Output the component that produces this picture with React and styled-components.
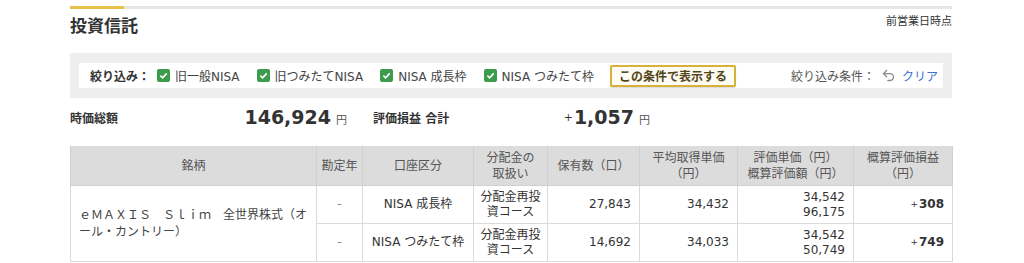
import React from "react";
import styled, { createGlobalStyle } from "styled-components";
import { Undo2 } from "lucide-react";

const GlobalStyle = createGlobalStyle`
  body {
    margin: 0;
    background: #fff;
    color: #333;
    font-family: "DejaVu Sans", "Noto Sans CJK JP", sans-serif;
  }
`;

const columns = [246, 46, 111, 74, 92, 98, 116, 99];

const rows = [
  { year: "-", account: "NISA 成長枠", payout: ["分配金再投", "資コース"], qty: "27,843", avg: "34,432", unit: "34,542", value: "96,175", gain: "308" },
  { year: "-", account: "NISA つみたて枠", payout: ["分配金再投", "資コース"], qty: "14,692", avg: "34,033", unit: "34,542", value: "50,749", gain: "749" },
];

const filters = ["旧一般NISA", "旧つみたてNISA", "NISA 成長枠", "NISA つみたて枠"];

function App() {
  return (
    <>
      <GlobalStyle />
      <Page>
        <TopBar>
          <TopBarAccent />
        </TopBar>
        <HeaderRow>
          <Title>投資信託</Title>
          <AsOf>前営業日時点</AsOf>
        </HeaderRow>

        <FilterPanel>
          <FilterBox>
            <FilterLabel>絞り込み：</FilterLabel>
            <FilterList>
              {filters.map((f) => (
                <FilterItem key={f}>
                  <Check>
                    <svg width="9" height="9" viewBox="0 0 10 10">
                      <path d="M1.5 5.2 4 7.6 8.6 2.6" fill="none" stroke="#fff" strokeWidth="1.8" />
                    </svg>
                  </Check>
                  {f}
                </FilterItem>
              ))}
            </FilterList>
            <ApplyButton>この条件で表示する</ApplyButton>
            <ClearArea>
              <span>絞り込み条件：</span>
              <Undo2 size={15} color="#8a8a8a" strokeWidth={2.2} />
              <ClearLink>クリア</ClearLink>
            </ClearArea>
          </FilterBox>
        </FilterPanel>

        <Summary>
          <SummaryItem>
            <SummaryLabel>時価総額</SummaryLabel>
            <SummaryValue>
              146,924<Yen>円</Yen>
            </SummaryValue>
          </SummaryItem>
          <SummaryItem>
            <SummaryLabel>評価損益 合計</SummaryLabel>
            <SummaryValue>
              <Plus $big>+</Plus>1,057<Yen>円</Yen>
            </SummaryValue>
          </SummaryItem>
        </Summary>

        <Table>
          <colgroup>
            {columns.map((w, i) => (
              <col key={i} style={{ width: w }} />
            ))}
          </colgroup>
          <thead>
            <tr>
              <Th>銘柄</Th>
              <Th>勘定年</Th>
              <Th>口座区分</Th>
              <Th>分配金の<br />取扱い</Th>
              <Th>保有数（口）</Th>
              <Th>平均取得単価<br />（円）</Th>
              <Th>評価単価（円）<br />概算評価額（円）</Th>
              <Th>概算評価損益<br />（円）</Th>
            </tr>
          </thead>
          <tbody>
            {rows.map((r, i) => (
              <tr key={i}>
                {i === 0 && (
                  <Td rowSpan={2} $align="left">
                    <FundName>ｅＭＡＸＩＳ　Ｓｌｉｍ　全世界株式（オール・カントリー）</FundName>
                  </Td>
                )}
                <Td $muted>{r.year}</Td>
                <Td>{r.account}</Td>
                <Td $tight>{r.payout[0]}<br />{r.payout[1]}</Td>
                <Td $align="right">{r.qty}</Td>
                <Td $align="right">{r.avg}</Td>
                <Td $align="right">{r.unit}<br />{r.value}</Td>
                <Td $align="right">
                  <Gain><Plus>+</Plus>{r.gain}</Gain>
                </Td>
              </tr>
            ))}
          </tbody>
        </Table>
      </Page>
    </>
  );
}

const Page = styled.div`
  width: 882px;
  margin-left: 70px;
  padding-top: 6px;
`;

const TopBar = styled.div`
  height: 3px;
  background: #e6e6e6;
`;

const TopBarAccent = styled.div`
  width: 54px;
  height: 100%;
  background: #e8c04a;
`;

const HeaderRow = styled.div`
  display: flex;
  justify-content: space-between;
  align-items: flex-start;
  height: 24px;
  margin-top: 5px;
`;

const Title = styled.h2`
  margin: 0;
  font-size: 17px;
  line-height: 24px;
  font-weight: bold;
  color: #333;
`;

const AsOf = styled.div`
  font-size: 11px;
  line-height: 16px;
  color: #333;
`;

const FilterPanel = styled.div`
  margin-top: 15px;
  background: #eeeeee;
  padding: 10px 9px;
`;

const FilterBox = styled.div`
  display: flex;
  align-items: center;
  height: 25px;
  background: #fff;
  padding: 0 5px 0 11px;
  font-size: 12px;
`;

const FilterLabel = styled.span`
  font-weight: bold;
  margin-right: 7px;
`;

const FilterList = styled.div`
  display: flex;
  align-items: center;
  gap: 17px;
`;

const FilterItem = styled.label`
  display: flex;
  align-items: center;
  gap: 5px;
  color: #444;
`;

const Check = styled.span`
  display: inline-flex;
  align-items: center;
  justify-content: center;
  width: 13px;
  height: 13px;
  border-radius: 2px;
  background: #3d9b4c;
`;

const ApplyButton = styled.button`
  margin-left: 16px;
  height: 22px;
  width: 126px;
  padding: 0;
  border: 2px solid #d8b13a;
  border-radius: 2px;
  background: #fffdf4;
  box-shadow: 0 1px 1px rgba(0, 0, 0, 0.15);
  font-family: inherit;
  font-size: 12px;
  font-weight: bold;
  color: #54441a;
`;

const ClearArea = styled.div`
  margin-left: auto;
  display: flex;
  align-items: center;
  gap: 6px;
  color: #555;
`;

const ClearLink = styled.span`
  color: #3a6fd4;
`;

const Summary = styled.div`
  display: flex;
  gap: 26px;
  height: 24px;
  margin-top: 7px;
`;

const SummaryItem = styled.div`
  width: 277px;
  display: flex;
  justify-content: space-between;
  align-items: center;
`;

const SummaryLabel = styled.span`
  font-size: 12px;
  font-weight: bold;
`;

const SummaryValue = styled.span`
  display: flex;
  align-items: baseline;
  font-size: 19px;
  font-weight: bold;
  color: #333;
`;

const Yen = styled.span`
  margin-left: 5px;
  font-size: 11px;
  font-weight: normal;
  color: #555;
`;

const Plus = styled.span`
  font-size: ${(p) => (p.$big ? "11px" : "9px")};
  font-weight: normal;
  margin-right: 1px;
  position: relative;
  top: ${(p) => (p.$big ? "-3px" : "-1px")};
`;

const Table = styled.table`
  margin-top: 17px;
  width: 882px;
  border-collapse: collapse;
  table-layout: fixed;
  font-size: 12px;
`;

const Th = styled.th`
  height: 39px;
  padding: 0 4px;
  background: #dcdcdc;
  border: 1px solid #d0d0d0;
  border-top: 0;
  font-weight: normal;
  line-height: 16px;
  color: #555;
  text-align: center;
`;

const Td = styled.td`
  height: 37px;
  padding: 0 ${(p) => (p.$tight ? "2px" : "8px")};
  border: 1px solid #dadada;
  line-height: 15px;
  text-align: ${(p) => p.$align || "center"};
  color: ${(p) => (p.$muted ? "#888" : "#333")};
  vertical-align: middle;
`;

const FundName = styled.div`
  line-height: 17px;
  color: #444;
`;

const Gain = styled.span`
  font-weight: bold;
  color: #333;
`;

export default App;
